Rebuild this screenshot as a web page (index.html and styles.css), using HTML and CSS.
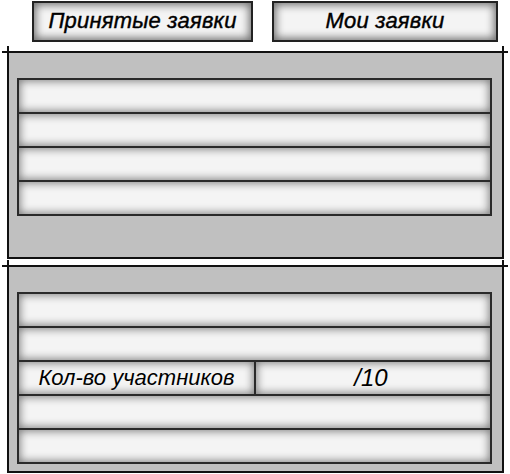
FILE: index.html
```html
<!DOCTYPE html>
<html lang="ru">
<head>
    <meta charset="UTF-8">
    <title>Заявки</title>
    <link rel="stylesheet" href="styles.css">
</head>
<body>
<div class="toolbar">
    <button type="button" class="tab tab-accepted">Принятые заявки</button>
    <button type="button" class="tab tab-mine">Мои заявки</button>
</div>

<div class="marks"></div>
<div class="rule"></div>
<div class="sheet sheet-top">
    <div class="rows">
        <div class="row"></div>
        <div class="row"></div>
        <div class="row"></div>
        <div class="row"></div>
    </div>
</div>

<div class="marks marks-second"></div>
<div class="rule"></div>
<div class="sheet sheet-bottom">
    <div class="rows">
        <div class="row"></div>
        <div class="row"></div>
        <div class="row row-split">
            <div class="cell cell-label">Кол-во участников</div>
            <div class="cell cell-value">/10</div>
        </div>
        <div class="row"></div>
        <div class="row"></div>
    </div>
</div>
</body>
</html>
```

FILE: styles.css
```css
body {
    margin: 0;
    background: #fff;
    font-family: "Liberation Sans", Arial, sans-serif;
    color: #000;
}

.toolbar {
    display: flex;
    gap: 19px;
    padding: 1px 0 0 32px;
    height: 41px;
}

.tab {
    height: 41px;
    border: 2px solid #222;
    background: #f4f4f4;
    box-shadow: inset 0 0 9px 2px rgba(0, 0, 0, 0.55);
    font-family: "Liberation Sans", Arial, sans-serif;
    font-style: italic;
    font-size: 22px;
    letter-spacing: 0.2px;
    -webkit-text-stroke: 0.4px #000;
    color: #000;
    padding: 0 0 2px;
}

.tab-accepted {
    width: 221px;
}

.tab-mine {
    width: 226px;
}

.marks {
    height: 5px;
    margin: 4px 6px 0 7px;
    border-left: 2px solid #111;
    border-right: 2px solid #111;
}

.marks-second {
    margin-top: 1px;
}

.rule {
    height: 2px;
    margin: 0 2px;
    background: #111;
}

.sheet {
    margin: 0 6px 0 7px;
    background: #c0c0c0;
    border: 2px solid #111;
    border-top: none;
}

.sheet-top {
    padding: 25px 10px 41px 8px;
}

.sheet-bottom {
    padding: 25px 10px 7px 8px;
}

.rows {
    border-bottom: 2px solid #2a2a2a;
}

.row {
    display: flex;
    height: 34px;
    box-sizing: border-box;
    border: 2px solid #2a2a2a;
    border-bottom: none;
    background: #f4f4f4;
    box-shadow: inset 0 0 8px 1px rgba(0, 0, 0, 0.5);
}

.row-split {
    box-shadow: none;
}

.cell {
    flex: 1;
    display: flex;
    align-items: center;
    justify-content: center;
    background: #f4f4f4;
    box-shadow: inset 0 0 8px 1px rgba(0, 0, 0, 0.5);
    font-style: italic;
    font-size: 22px;
}

.cell-label {
    flex: 0 0 235px;
    border-right: 2px solid #2a2a2a;
}

.cell-value {
    padding-right: 4px;
    font-size: 24px;
}
```
